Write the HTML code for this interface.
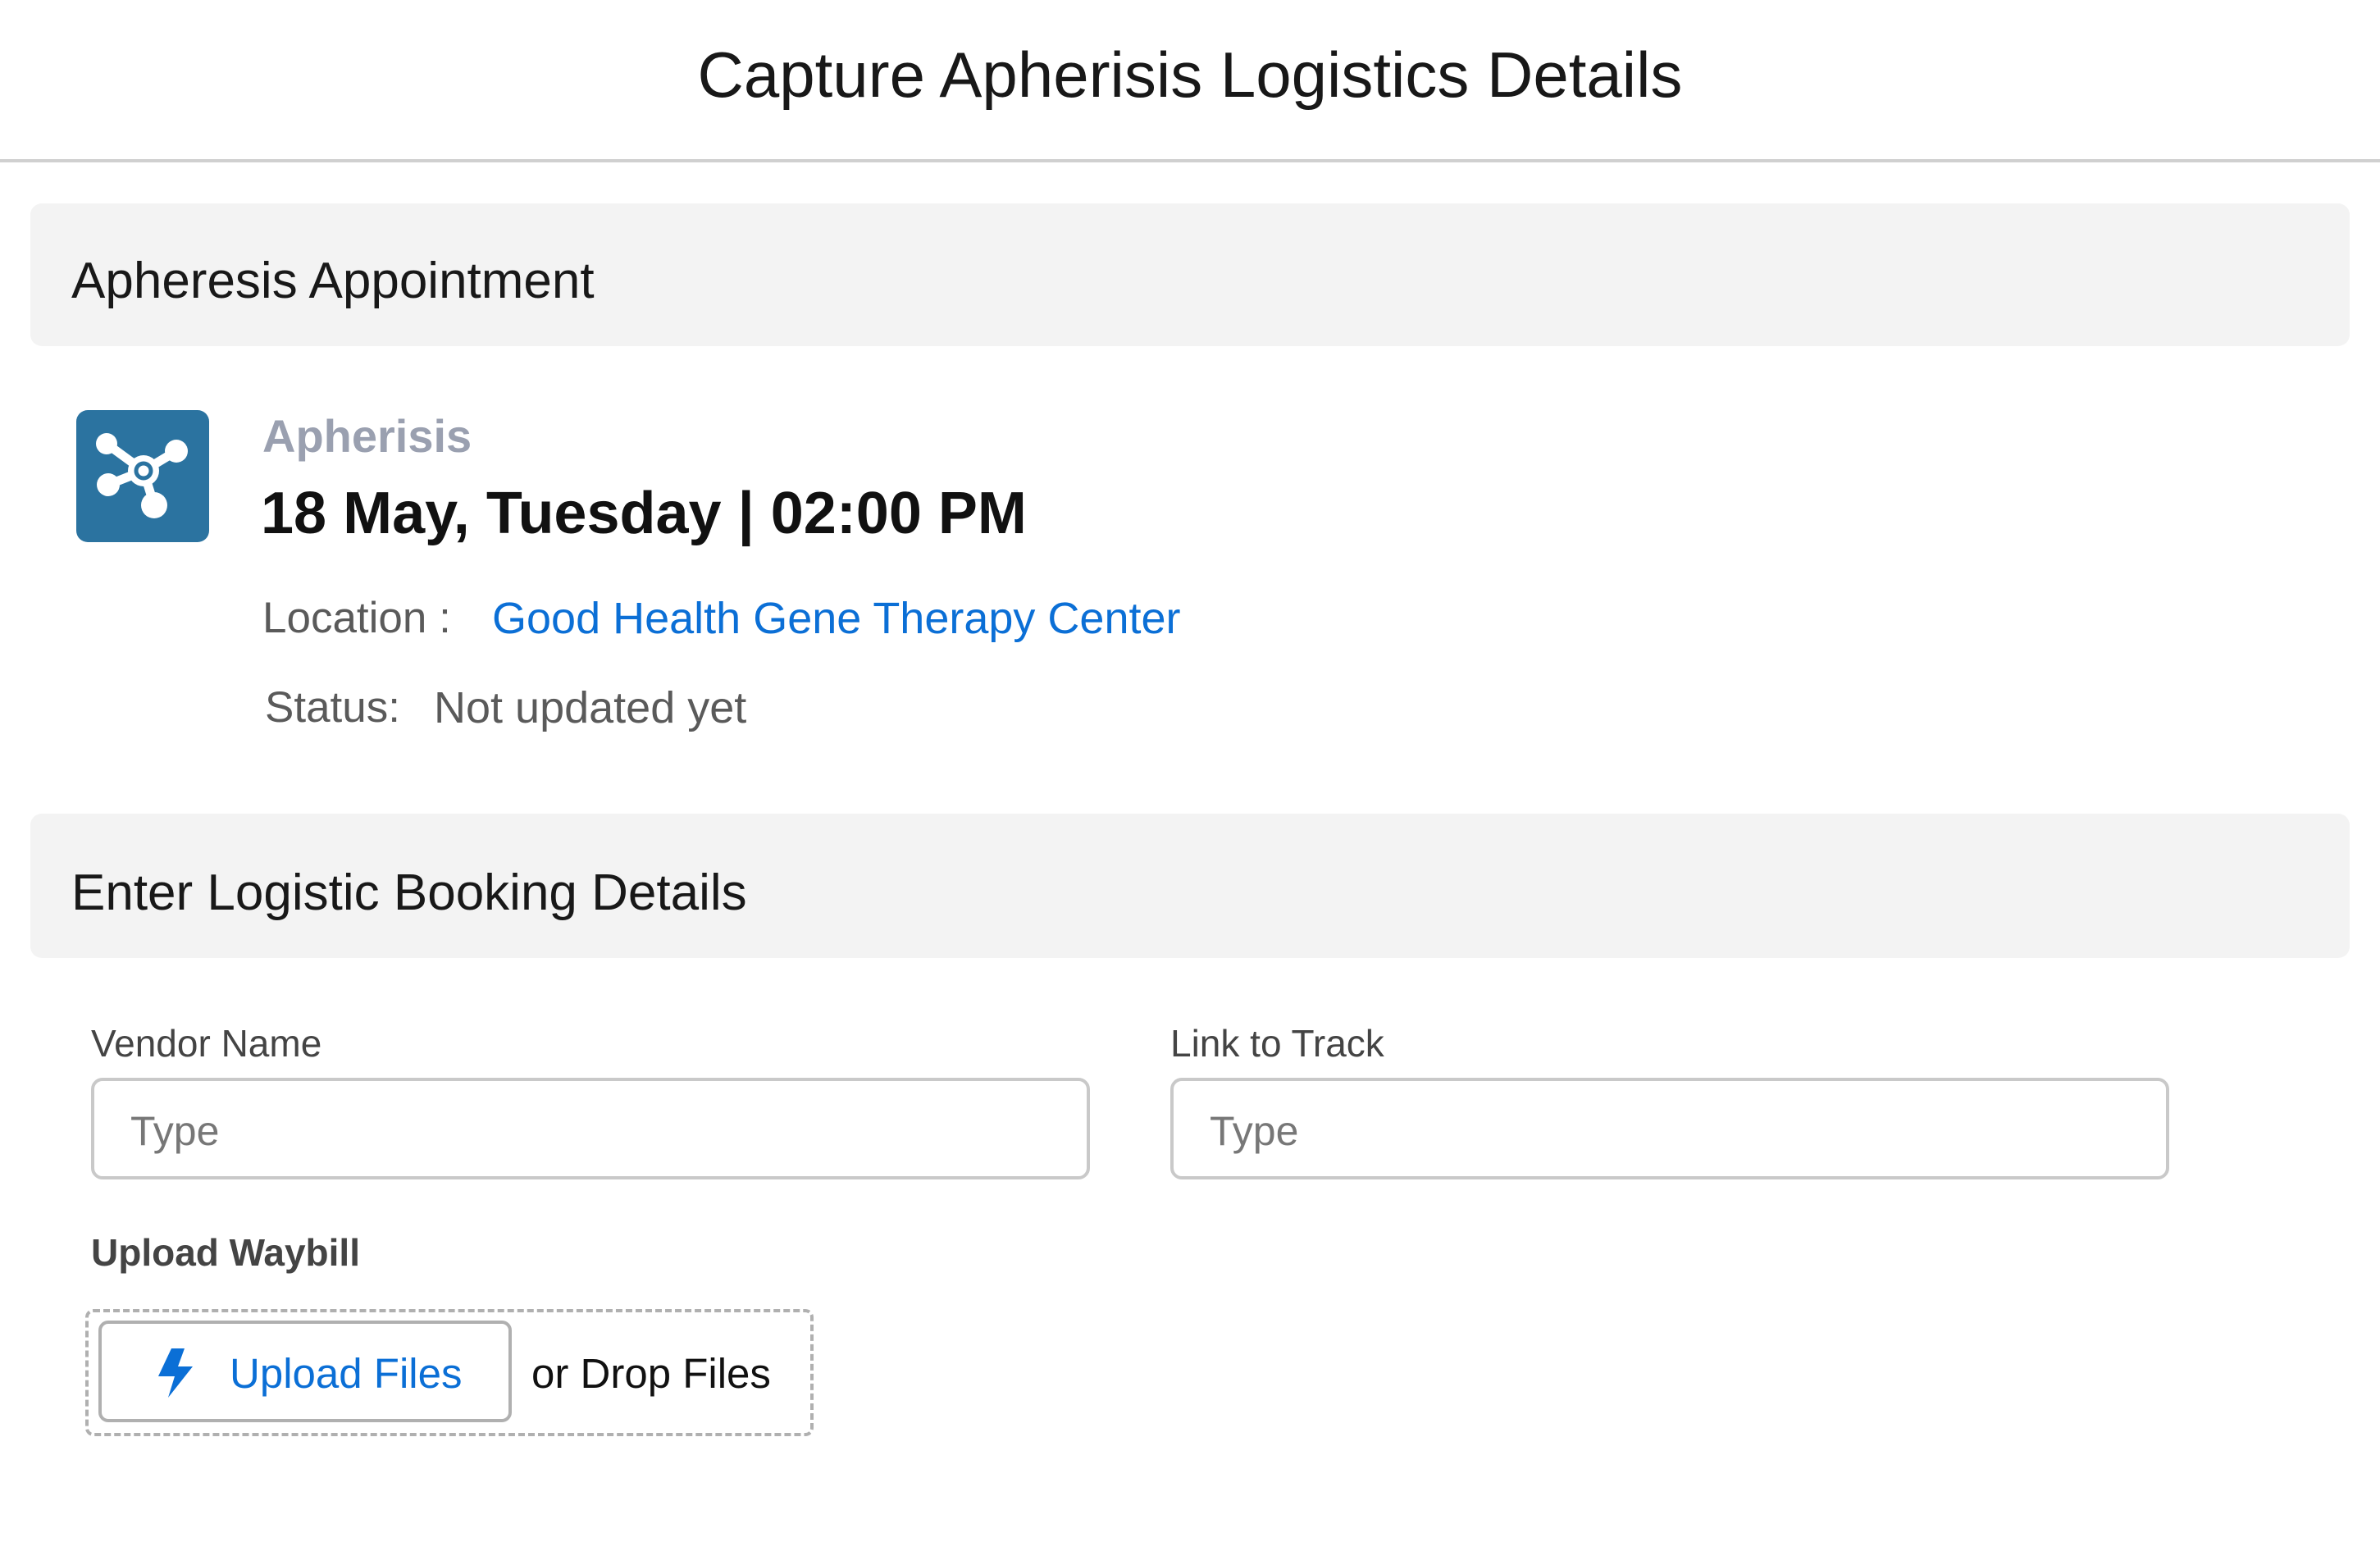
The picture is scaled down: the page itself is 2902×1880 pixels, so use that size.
<!DOCTYPE html>
<html><head><meta charset="utf-8"><style>
html,body{margin:0;padding:0;background:#fff;width:2902px;height:1880px;overflow:hidden;font-family:"Liberation Sans",sans-serif;}
.a{position:absolute;white-space:nowrap;line-height:1;}
.panel{position:absolute;left:37px;width:2828px;background:#f3f3f3;border-radius:14px;}
.inp{position:absolute;border:4px solid #c9c9c9;border-radius:14px;box-sizing:border-box;background:#fff;}
</style></head><body>
<div class="a" style="left:0;width:2902px;text-align:center;top:52px;font-size:78px;color:#181818;">Capture Apherisis Logistics Details</div>
<div style="position:absolute;left:0;top:194px;width:2902px;height:4px;background:#d0d0d0;"></div>

<div class="panel" style="top:248px;height:174px;"></div>
<div class="a" style="left:87px;top:312px;font-size:62px;color:#181818;">Apheresis Appointment</div>

<svg style="position:absolute;left:93px;top:500px" width="162" height="161" viewBox="0 0 162 161">
<rect x="0" y="0" width="162" height="161" rx="14" fill="#2b73a0"/>
<g stroke="#fff" stroke-width="11" fill="none">
<line x1="37" y1="41" x2="82" y2="74"/><line x1="122" y1="50" x2="82" y2="74"/><line x1="39" y1="91" x2="82" y2="74"/><line x1="95" y1="116" x2="82" y2="74"/>
</g>
<g fill="#fff"><circle cx="37" cy="41" r="13"/><circle cx="122" cy="50" r="14"/><circle cx="39" cy="91" r="14"/><circle cx="95" cy="116" r="16"/><circle cx="82" cy="74" r="19"/></g>
<circle cx="82" cy="74" r="9" fill="none" stroke="#2b73a0" stroke-width="5"/>
</svg>

<div class="a" style="left:320px;top:504px;font-size:56px;font-weight:bold;color:#9aa0b0;">Apherisis</div>
<div class="a" style="left:318px;top:590px;font-size:72px;font-weight:bold;color:#111;">18 May, Tuesday | 02:00 PM</div>
<div class="a" style="left:320px;top:727px;font-size:53px;color:#5a5a5a;">Location :</div>
<div class="a" style="left:600px;top:727px;font-size:54px;color:#0b6fd6;">Good Health Gene Therapy Center</div>
<div class="a" style="left:323px;top:836px;font-size:53px;color:#5a5a5a;">Status:</div>
<div class="a" style="left:529px;top:836px;font-size:54px;color:#5a5a5a;">Not updated yet</div>

<div class="panel" style="top:992px;height:176px;"></div>
<div class="a" style="left:87px;top:1058px;font-size:62px;color:#181818;">Enter Logistic Booking Details</div>

<div class="a" style="left:111px;top:1249px;font-size:46px;color:#444;">Vendor Name</div>
<div class="inp" style="left:111px;top:1314px;width:1218px;height:124px;"></div>
<div class="a" style="left:159px;top:1354px;font-size:50px;color:#777;">Type</div>
<div class="a" style="left:1427px;top:1249px;font-size:46px;color:#444;">Link to Track</div>
<div class="inp" style="left:1427px;top:1314px;width:1218px;height:124px;"></div>
<div class="a" style="left:1475px;top:1354px;font-size:50px;color:#777;">Type</div>

<div class="a" style="left:111px;top:1504px;font-size:46px;font-weight:bold;color:#444;">Upload Waybill</div>
<div style="position:absolute;left:104px;top:1596px;width:888px;height:155px;border:4px dashed #b0b0b0;border-radius:10px;box-sizing:border-box;"></div>
<div style="position:absolute;left:120px;top:1610px;width:504px;height:124px;border:4px solid #b0b0b0;border-radius:12px;box-sizing:border-box;"></div>
<svg style="position:absolute;left:191px;top:1644px" width="46" height="60" viewBox="0 0 46 60"><path d="M18 0 L2 34 L22 34 L14 60 L44 22 L26 22 L34 0 Z" fill="#0b6fd6"/></svg>
<div class="a" style="left:280px;top:1649px;font-size:51px;color:#0b6fd6;">Upload Files</div>
<div class="a" style="left:648px;top:1649px;font-size:51px;color:#111;">or Drop Files</div>
</body></html>
